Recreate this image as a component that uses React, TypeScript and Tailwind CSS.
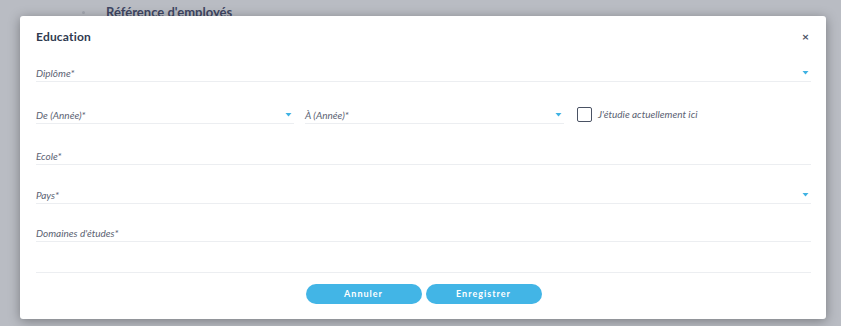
import React from "react";

const Arrow = () => (
  <svg width="7" height="4" viewBox="0 0 7 4" className="shrink-0">
    <path d="M0.5 0 L6.5 0 L3.5 3.5 Z" fill="#3fb2e3" />
  </svg>
);

function Field({ label, select, className = "" }: { label: string; select?: boolean; className?: string }) {
  return (
    <div className={`h-[17px] border-b border-[#eceef1] flex items-center justify-between pr-[2px] ${className}`}>
      <span className="text-[10px] italic text-[#5b6272] leading-[16px]">{label}</span>
      {select && <Arrow />}
    </div>
  );
}

export default function App() {
  return (
    <div className="relative w-[841px] h-[326px] overflow-hidden bg-[#b9bcc3]" style={{ fontFamily: "Lato, 'Noto Sans', sans-serif" }}>
      <div className="flex items-center h-[16px] pl-[82px] pt-[8px]">
        <span className="w-[3px] h-[3px] rounded-full bg-[#a3a7b0]" />
        <span className="ml-[21px] text-[13px] font-bold text-[#3f4763] leading-[16px]">Référence d'employés</span>
      </div>
      <div className="absolute left-[20px] top-[16px] w-[806px] h-[303px] bg-white rounded-[3px] shadow-[0_2px_12px_rgba(0,0,0,0.35)] pl-[16px] pr-[15px] flex flex-col">
        <div className="pt-[13px] flex items-center justify-between">
          <span className="text-[12px] font-bold text-[#2f3a4f] leading-[16px] tracking-[0.2px]">Education</span>
          <span className="text-[12px] font-bold text-[#4a5264] leading-[16px] pr-[2px]">×</span>
        </div>
        <Field label="Diplôme*" select className="mt-[20px]" />
        <div className="flex items-center mt-[25px]">
          <Field label="De (Année)*" select className="w-[258px]" />
          <Field label="À (Année)*" select className="w-[259px] ml-[11px]" />
          <div className="flex items-center ml-[13px] -mt-[2px]">
            <span className="w-[15px] h-[15px] border-[1.5px] border-[#4a5264] rounded-[2px]" />
            <span className="ml-[6px] text-[10px] italic text-[#5b6272]">J'étudie actuellement ici</span>
          </div>
        </div>
        <Field label="Ecole*" className="mt-[24px]" />
        <Field label="Pays*" select className="mt-[22px]" />
        <Field label="Domaines d'études*" className="mt-[21px]" />
        <div className="mt-[30px] border-b border-[#eceef1]" />
        <div className="mt-[11px] flex justify-center gap-[4px]">
          <button className="w-[116px] h-[20px] rounded-full bg-[#42b5e6] text-white text-[9px] font-bold tracking-[1px]">Annuler</button>
          <button className="w-[116px] h-[20px] rounded-full bg-[#42b5e6] text-white text-[9px] font-bold tracking-[1px]">Enregistrer</button>
        </div>
      </div>
    </div>
  );
}
